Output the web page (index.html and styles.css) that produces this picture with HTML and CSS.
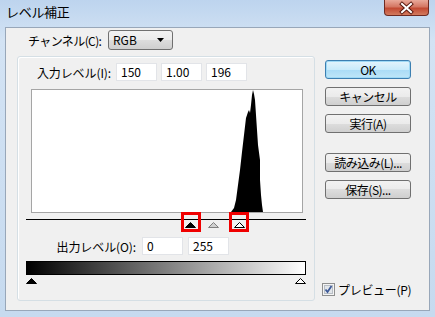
FILE: index.html
```html
<!DOCTYPE html>
<html lang="ja">
<head>
    <meta charset="UTF-8">
    <title>レベル補正</title>
    <link rel="stylesheet" href="styles.css">
</head>
<body>
    <div class="window">
        <div class="titlebar">
            <span class="title">レベル補正</span>
            <div class="close-btn">
                <svg width="45" height="16" viewBox="0 0 45 16">
                    <path d="M18 4 L27 12 M27 4 L18 12" stroke="#5a1a10" stroke-width="4" stroke-linecap="square"/>
                    <path d="M18 4 L27 12 M27 4 L18 12" stroke="#fff" stroke-width="2" stroke-linecap="square"/>
                </svg>
            </div>
        </div>

        <div class="client">
            <div class="main">
                <div class="channel-row">
                    <span class="channel-label">チャンネル(C):</span>
                    <div class="select">
                        <span>RGB</span>
                        <svg class="select-arrow" width="7" height="4" viewBox="0 0 7 4"><path d="M0 0 H7 L3.5 4 Z" fill="#000"/></svg>
                    </div>
                </div>

                <div class="panel">
                    <div class="field-row input-row">
                        <span class="field-label">入力レベル(I):</span>
                        <div class="field">150</div>
                        <div class="field">1.00</div>
                        <div class="field">196</div>
                    </div>

                    <div class="histogram">
                        <svg width="270" height="122" viewBox="0 0 270 122">
                            <polygon fill="#000" points="199,122 202,118 204,110 206,95 208,80 210,62 212,45 214,28 216,22 217,20 218,23 219,15 220,5 221,0 222,4 223,10 224,25 225,40 226,55 228,70 228,90 229,105 230,115 231,122"/>
                        </svg>
                    </div>

                    <div class="slider">
                        <span class="handle" style="left:159px">
                            <svg width="11" height="6" viewBox="0 0 11 6"><path d="M5.5 0.5 L10.5 5.5 H0.5 Z" fill="#000" stroke="#000"/></svg>
                        </span>
                        <span class="handle" style="left:182px">
                            <svg width="11" height="6" viewBox="0 0 11 6"><path d="M5.5 0.5 L10.5 5.5 H0.5 Z" fill="#d0d0d0" stroke="#808080"/></svg>
                        </span>
                        <span class="handle" style="left:208px">
                            <svg width="11" height="6" viewBox="0 0 11 6"><path d="M5.5 0.5 L10.5 5.5 H0.5 Z" fill="#fff" stroke="#000"/></svg>
                        </span>
                    </div>

                    <div class="field-row output-row">
                        <span class="field-label">出力レベル(O):</span>
                        <div class="field">0</div>
                        <div class="field">255</div>
                    </div>

                    <div class="gradient"></div>

                    <div class="slider out">
                        <span class="handle" style="left:0px">
                            <svg width="11" height="6" viewBox="0 0 11 6"><path d="M5.5 0.5 L10.5 5.5 H0.5 Z" fill="#000" stroke="#000"/></svg>
                        </span>
                        <span class="handle" style="left:269px">
                            <svg width="11" height="6" viewBox="0 0 11 6"><path d="M5.5 0.5 L10.5 5.5 H0.5 Z" fill="#fff" stroke="#000"/></svg>
                        </span>
                    </div>

                    <!-- annotation boxes -->
                    <div class="mark mark-black"></div>
                    <div class="mark mark-white"></div>
                </div>
            </div>

            <div class="side">
                <button class="btn default">OK</button>
                <button class="btn">キャンセル</button>
                <button class="btn">実行(A)</button>
                <button class="btn spaced">読み込み(L)...</button>
                <button class="btn">保存(S)...</button>

                <label class="preview">
                    <span class="checkbox">
                        <svg width="13" height="13" viewBox="0 0 13 13">
                            <rect x="0.5" y="0.5" width="12" height="12" fill="#f4f4f4" stroke="#8e8f8f"/>
                            <rect x="2.5" y="2.5" width="8" height="8" fill="#e2e6ea" stroke="#b8bec6"/>
                            <path d="M3.5 6.5 L5.5 9 L9.5 3" fill="none" stroke="#3d5a98" stroke-width="1.8"/>
                        </svg>
                    </span>
                    プレビュー(P)
                </label>
            </div>
        </div>
    </div>
</body>
</html>
```

FILE: styles.css
```css
body {
    margin: 0;
    font-family: "Noto Sans CJK JP", "Noto Sans", sans-serif;
    font-size: 12px;
    color: #000;
}
.window {
    width: 435px;
    height: 317px;
    display: flex;
    flex-direction: column;
    background: linear-gradient(to bottom, #bdd4ee, #d3e3f4 40px, #c6daef);
}
.titlebar {
    height: 27px;
    display: flex;
    align-items: flex-start;
    padding-left: 6px;
}
.title {
    margin-top: 4px;
    font-size: 13px;
    line-height: 16px;
    letter-spacing: -0.3px;
}
.close-btn {
    margin-left: auto;
    margin-right: 6px;
    width: 45px;
    height: 16px;
    border: 1px solid #6e2a22;
    border-top: none;
    border-radius: 0 0 4px 4px;
    box-sizing: border-box;
    background: linear-gradient(to bottom, #e9a99a, #d47763 45%, #c24a33 55%, #d27a5e);
    overflow: hidden;
}
.close-btn svg {
    display: block;
    margin-left: -1px;
}
.client {
    margin: 0 5px 6px;
    height: 284px;
    box-sizing: border-box;
    border: 1px solid #98a7b9;
    background: #f0f0f0;
    display: flex;
}
.main {
    margin-left: 11px;
    width: 298px;
}
.channel-row {
    display: flex;
    align-items: center;
    height: 20px;
    margin-top: 2px;
    padding-left: 11px;
}
.channel-label {
    width: 80px;
    letter-spacing: -0.6px;
}
.select {
    width: 65px;
    height: 20px;
    box-sizing: border-box;
    border: 1px solid #707070;
    border-radius: 3px;
    background: linear-gradient(to bottom, #f2f2f2, #ebebeb 50%, #dddddd 50%, #cfcfcf);
    display: flex;
    align-items: center;
    padding: 0 8px 0 4px;
    line-height: 16px;
}
.select-arrow {
    margin-left: auto;
}
.panel {
    position: relative;
    margin-top: 6px;
    height: 245px;
    box-sizing: border-box;
    border: 1px solid #d5dfe5;
    border-radius: 3px;
    box-shadow: inset 1px 1px 0 #fff;
}
.field-row {
    display: flex;
    align-items: center;
    height: 18px;
}
.field-label {
    text-align: right;
    letter-spacing: -0.1px;
    white-space: nowrap;
}
.field {
    width: 41px;
    height: 18px;
    box-sizing: border-box;
    background: #fff;
    border: 1px solid #e2e4e8;
    padding-left: 4px;
    line-height: 16px;
}
.input-row {
    margin-top: 6px;
}
.input-row .field-label {
    width: 93px;
    margin-right: 5px;
}
.input-row .field + .field {
    margin-left: 4px;
}
.output-row {
    margin-top: 6px;
}
.output-row .field-label {
    width: 118px;
    margin-right: 6px;
}
.output-row .field + .field {
    margin-left: 5px;
}
.histogram {
    margin: 8px 0 0 13px;
    width: 272px;
    height: 124px;
    box-sizing: border-box;
    border: 1px solid #a5a5a5;
    background: #fff;
}
.histogram svg {
    display: block;
}
.slider {
    position: relative;
    margin: 6px 0 0 8px;
    width: 280px;
    height: 12px;
    border-top: 1px solid #000;
    box-sizing: border-box;
}
.slider.out {
    margin-top: 0;
    border-top: none;
    height: 12px;
}
.handle {
    position: absolute;
    top: 2px;
    line-height: 0;
}
.slider.out .handle {
    top: 3px;
}
.gradient {
    margin: 6px 0 0 8px;
    width: 280px;
    height: 14px;
    box-sizing: border-box;
    border: 1px solid #000;
    background: linear-gradient(to right, #000, #fff);
}
.mark {
    position: absolute;
    top: 155px;
    width: 20px;
    height: 20px;
    box-sizing: border-box;
    border: 3px solid #f00000;
}
.mark-black {
    left: 163px;
}
.mark-white {
    left: 211px;
}
.side {
    margin-left: 10px;
    padding-top: 32px;
    display: flex;
    flex-direction: column;
    align-items: flex-start;
}
.btn {
    width: 86px;
    height: 19px;
    margin: 0 0 8px;
    padding: 0;
    font-family: inherit;
    font-size: 12px;
    line-height: 16px;
    color: #000;
    border: 1px solid #707070;
    border-radius: 3px;
    background: linear-gradient(to bottom, #f2f2f2, #ebebeb 50%, #dddddd 50%, #cfcfcf);
    letter-spacing: -0.5px;
}
.btn.default {
    border-color: #3c7fb1;
    background: linear-gradient(to bottom, #e4f4fc, #c9ebfb 50%, #a9dbf6 50%, #bfe6f8);
    box-shadow: inset 0 0 0 1px #9fd9f5;
}
.btn.spaced {
    margin-top: 12px;
}
.preview {
    margin-top: auto;
    margin-bottom: 14px;
    margin-left: -3px;
    display: flex;
    align-items: center;
    height: 13px;
    line-height: 13px;
    letter-spacing: -0.3px;
}
.checkbox {
    width: 13px;
    height: 13px;
    margin-right: 3px;
}
.checkbox svg {
    display: block;
}
```
